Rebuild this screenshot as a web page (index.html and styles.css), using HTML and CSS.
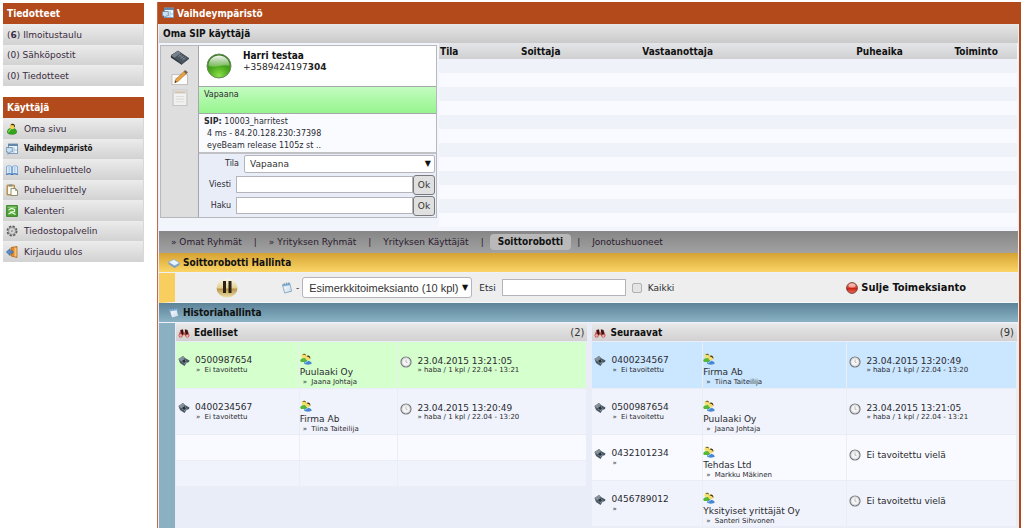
FILE: index.html
```html
<!DOCTYPE html>
<html lang="fi">
<head>
<meta charset="utf-8">
<title>Vaihdeympäristö</title>
<link rel="stylesheet" href="styles.css">
</head>
<body>
<svg class="defs" aria-hidden="true">
  <defs>
    <radialGradient id="g-green" cx="50%" cy="90%" r="85%"><stop offset="0" stop-color="#8be04a"/><stop offset=".5" stop-color="#4aa81c"/><stop offset="1" stop-color="#2f7a12"/></radialGradient>
    <linearGradient id="g-shine" x1="0" y1="0" x2="0" y2="1"><stop offset="0" stop-color="#fff" stop-opacity=".95"/><stop offset="1" stop-color="#fff" stop-opacity=".25"/></linearGradient>
    <linearGradient id="g-gold" x1="0" y1="0" x2="0" y2="1"><stop offset="0" stop-color="#fbf8ec"/><stop offset=".5" stop-color="#e4cf90"/><stop offset=".55" stop-color="#b8954a"/><stop offset="1" stop-color="#efe0a8"/></linearGradient>
    <linearGradient id="g-red" x1="0" y1="0" x2="0" y2="1"><stop offset="0" stop-color="#f4a090"/><stop offset=".45" stop-color="#e04a38"/><stop offset=".5" stop-color="#c81c10"/><stop offset="1" stop-color="#f07058"/></linearGradient>
    <linearGradient id="g-paper" x1="0" y1="0" x2="1" y2="1"><stop offset="0" stop-color="#fff"/><stop offset="1" stop-color="#c9d8e8"/></linearGradient>
  </defs>
  <symbol id="i-user" viewBox="0 0 12 13"><path d="M1 10c0-3 2-4.500 5-4.500s5 1.500 5 4.500c0 3-10 3-10 0z" fill="#35a51d" stroke="#1f7a10" stroke-width=".6"/><ellipse cx="6.300" cy="3.800" rx="2.700" ry="3" fill="#f2cf57"/><path d="M4.500 2.500C5 0 9 0 9.200 3.500L9 5C8 4 8 3 7.500 2.300z" fill="#2b2b14"/><path d="M2.500 10c0-2 1-3 2.500-3" stroke="#b5f08c" fill="none"/></symbol>
  <symbol id="i-window" viewBox="0 0 12 12"><rect x="2.500" y="1" width="9" height="9.500" fill="#eef7fd" stroke="#7d9cb8"/><path d="M2 1h10v2H2z" fill="#6488ab"/><path d="M8 4v6M8 7h3" stroke="#a5c1d8"/><path d="M.3 4.500h6v4.500H4L2 11.300V9H.3z" fill="#c9e0f2" stroke="#537ba0" stroke-width=".7"/></symbol>
  <symbol id="i-book" viewBox="0 0 12 12"><path d="M.5 2.500C2.500 1.500 4.500 1.500 6 3c1.500-1.500 3.500-1.500 5.500-.5v8C9.500 9.500 7.500 9.500 6 10.700 4.500 9.500 2.500 9.500.5 10.500z" fill="#dcebf9" stroke="#5f93c8" stroke-width=".7"/><path d="M.3 10.500C2.500 9.500 4.500 9.500 6 10.700 7.500 9.500 9.500 9.500 11.700 10.500M6 3v7.500" stroke="#2f69ae" fill="none"/><path d="M3.200 3v5.500M8.800 3v5.500" stroke="#8db4dc" stroke-width=".8"/></symbol>
  <symbol id="i-clip" viewBox="0 0 12 12"><rect x="1" y="1" width="7.500" height="10" rx=".6" fill="#d9a951" stroke="#8f6f32" stroke-width=".7"/><path d="M2 2.500h5.500v7.500H2z" fill="#fbfaf0"/><path d="M3.200.5h3v2h-3z" fill="#8b8b8b"/><path d="M5 4.500h4.500l2 2v5H5z" fill="#fdfdf4" stroke="#77775d" stroke-width=".8"/><path d="M9.500 4.500v2h2" stroke="#77775d" fill="none" stroke-width=".7"/></symbol>
  <symbol id="i-cal" viewBox="0 0 12 12"><rect x=".7" y=".7" width="10.600" height="10.600" fill="#53a839" stroke="#2f7a1d"/><path d="M1.500 2.200h9" stroke="#a5d98e"/><path d="M2.500 5l3-1.500 3 1v2L5 7l4.500 2.500M2.500 9l3-1.500" stroke="#f0ffe9" fill="none" stroke-width="1.200"/></symbol>
  <symbol id="i-gear" viewBox="0 0 12 12"><circle cx="6" cy="6" r="4.500" fill="#ccc" stroke="#5e5e60" stroke-width="2" stroke-dasharray="2.200 1.330"/><circle cx="6" cy="6" r="3.500" fill="#d5d5d5" stroke="#8a8a8a" stroke-width=".8"/><circle cx="6" cy="6" r=".8" fill="#666"/></symbol>
  <symbol id="i-exit" viewBox="0 0 12 12"><path d="M5 1.500L11 .5v11l-6-1.500z" fill="#e58a2c" stroke="#a55d18" stroke-width=".7"/><path d="M8.500 1.500l2 .2v9l-2-.5z" fill="#f7c277"/><path d="M.3 6L4 2.800V5h3v2.200H4v2.300z" fill="#5a90cf" stroke="#2c5c99" stroke-width=".6"/></symbol>
  <symbol id="i-phone" viewBox="0 0 20 16"><path d="M1 6L8 1.500l11 7.500-7 5.500z" fill="#4b5560" stroke="#2e353d" stroke-width=".7"/><path d="M1 6l7-4.500 3 2L4 8.500z" fill="#75818c"/><path d="M1 6l11 8.500v1L.8 8z" fill="#27303a"/><path d="M8 7.500l4-2.500M10 9l4-2.500M12 10.500l4-2.500M9 5.500l5.500 4.200" stroke="#8b97a1" stroke-width=".6"/></symbol>
  <symbol id="i-edit" viewBox="0 0 20 18"><rect x="1.500" y="6" width="16.500" height="10.500" fill="#fdfdfd" stroke="#bcbcbc"/><path d="M4 9.500h6M4 12h4" stroke="#d5d5d5"/><path d="M4.500 14.500l1-3.500L15.500 1.500l2.500 2L8 13z" fill="#efa33b" stroke="#9c6a28" stroke-width=".7"/><path d="M14 3l2.500 2.200L18 3.500l-2.500-2z" fill="#6b625c"/><path d="M4.500 14.500l.6-2 1.300 1.200z" fill="#222"/></symbol>
  <symbol id="i-note" viewBox="0 0 14 16"><path d="M.5 1h13v14.500H.5z" fill="#f1f1f0" stroke="#c5c5c5"/><path d="M1 1.500h12v3H1z" fill="#ddd"/><path d="M2 3h10" stroke="#d4b591"/><path d="M3 7h8M3 9.500h8M3 12h8" stroke="#ddd"/></symbol>
  <symbol id="i-small-phone" viewBox="0 0 12 12"><path d="M.5 4L5 1l2 2 4.500 2.500L11 7 8.500 8 6.500 11 2 8z" fill="#4c5863"/><path d="M.5 4L5 1l2 1.700L2.500 6z" fill="#87949d"/><path d="M3 6l3.500-2.200M4.500 7.500L8 5M6 9l3-2.300" stroke="#9eb3bb" stroke-width=".7"/><circle cx="6" cy="6" r="1.300" fill="#26323b"/></symbol>
  <symbol id="i-people" viewBox="0 0 12 12"><path d="M.3 7.500C.3 4.500 6.500 4 7 7v2H1z" fill="#55b935"/><circle cx="3.800" cy="3" r="2.300" fill="#f5e06c"/><path d="M2.300 1.700C3 .2 6 .3 6.200 2.700L5 2z" fill="#6d6420"/><path d="M4 10.500c0-3.500 7-4 7.700 0C11 12 5 12 4 10.500z" fill="#4688cf"/><circle cx="7.800" cy="5" r="2.400" fill="#f7da69"/><path d="M6.500 3.300C7.500 2 10.700 2.300 10.400 6L9 4.300z" fill="#443613"/><path d="M5 10.300c.5-1 1.500-1.800 2.500-1.800" stroke="#b9ddfb" fill="none"/></symbol>
  <symbol id="i-clock" viewBox="0 0 12 12"><circle cx="6" cy="6" r="5" fill="#f5f5f5" stroke="#77797c" stroke-width="1.200"/><circle cx="6" cy="6" r="3.900" fill="none" stroke="#cfd1d4" stroke-width=".7"/><path d="M6 3.500v2.700l1.500.4" stroke="#a5a5a5" fill="none" stroke-width=".7"/></symbol>
  <symbol id="i-bino" viewBox="0 0 12 12"><path d="M2.500 3L5 2.500l.6 3h1L7 2.500l2.500.5L11.500 8c.2 3-3.500 3.500-4.200 1L6 7.500 4.700 9C4 11.500.3 11 .5 8z" fill="#c65550"/><path d="M2.500 3L5 2.500l.6 4.500-1.800 1zM6.800 2.500l2.500.5 1 4-2.500 1.200z" fill="#351516"/><circle cx="2.600" cy="8.500" r="1.300" fill="#efaaa5"/><circle cx="9.300" cy="8.700" r="1.300" fill="#efaaa5"/></symbol>
  <symbol id="i-disk" viewBox="0 0 12 12"><path d="M.5 5L6 2.500 11.500 6v2L6.500 11 .5 7z" fill="#7aa2c9"/><path d="M.5 5L6 2.500 11.500 6l-5 2.800z" fill="#e9f4ff" stroke="#88aacb" stroke-width=".5"/></symbol>
  <symbol id="i-pad" viewBox="0 0 12 13"><path d="M1 3l8-1.500L11 10l-7.500 2z" fill="url(#g-paper)" stroke="#6f9abb" stroke-width=".8"/><path d="M1 3l8-1.500.5 2-8 1.500z" fill="#7fb4da"/><path d="M3 1v2.500M5.500.5V3M8 .3v2.500" stroke="#5f7d95" stroke-width=".7"/><path d="M11 10l-2.500-.3.500 1z" fill="#87a9c1"/></symbol>
  <symbol id="i-pause" viewBox="0 0 22 20"><ellipse cx="11" cy="10" rx="10.500" ry="9.500" fill="url(#g-gold)"/><path d="M7 3h3v12H7zM12.500 3h3v12h-3z" fill="#2b2115"/></symbol>
  <symbol id="i-ball" viewBox="0 0 26 26"><circle cx="13" cy="13" r="12" fill="url(#g-green)" stroke="#6b8a62"/><path d="M2.500 13C2.500-1 23.500-1 23.500 13 17 10.500 9 15.500 2.500 13z" fill="url(#g-shine)"/></symbol>
  <symbol id="i-stop" viewBox="0 0 12 12"><circle cx="6" cy="6" r="5.400" fill="url(#g-red)" stroke="#6e3430" stroke-width=".9"/><ellipse cx="6" cy="3.500" rx="3.300" ry="2" fill="#fff" opacity=".45"/></symbol>
</svg>

<div class="page">
  <aside class="side">
    <nav class="box">
      <h2 class="bar-red">Tiedotteet</h2>
      <ul class="menu">
        <li><a href="#">(<b>6</b>) Ilmoitustaulu</a></li>
        <li><a href="#">(0) Sähköpostit</a></li>
        <li><a href="#">(0) Tiedotteet</a></li>
      </ul>
    </nav>
    <nav class="box">
      <h2 class="bar-red">Käyttäjä</h2>
      <ul class="menu icons">
        <li><a href="#"><svg class="ic"><use href="#i-user"/></svg>Oma sivu</a></li>
        <li><a href="#" class="current"><svg class="ic"><use href="#i-window"/></svg>Vaihdeympäristö</a></li>
        <li><a href="#"><svg class="ic"><use href="#i-book"/></svg>Puhelinluettelo</a></li>
        <li><a href="#"><svg class="ic"><use href="#i-clip"/></svg>Puheluerittely</a></li>
        <li><a href="#"><svg class="ic"><use href="#i-cal"/></svg>Kalenteri</a></li>
        <li><a href="#"><svg class="ic"><use href="#i-gear"/></svg>Tiedostopalvelin</a></li>
        <li><a href="#"><svg class="ic"><use href="#i-exit"/></svg>Kirjaudu ulos</a></li>
      </ul>
    </nav>
  </aside>

  <main class="main">
    <h1 class="bar-red title"><svg class="ic"><use href="#i-window"/></svg>Vaihdeympäristö</h1>
    <h2 class="bar-grey">Oma SIP käyttäjä</h2>

    <section class="top">
      <div class="sip">
        <div class="tools">
          <svg class="tool"><use href="#i-phone"/></svg>
          <svg class="tool"><use href="#i-edit"/></svg>
          <svg class="tool"><use href="#i-note"/></svg>
        </div>
        <div class="card">
          <div class="who">
            <svg class="ball"><use href="#i-ball"/></svg>
            <div><h3 class="name">Harri testaa</h3><p class="tel">+3589424197<b>304</b></p></div>
          </div>
          <p class="status">Vapaana</p>
          <div class="info">
            <p><b>SIP:</b> 10003_harritest</p>
            <p class="in">4 ms - 84.20.128.230:37398</p>
            <p class="in">eyeBeam release 1105z st ..</p>
          </div>
          <form class="form">
            <div class="line"><label class="wide" for="tila">Tila</label><span class="pick"><select id="tila"><option>Vapaana</option></select></span></div>
            <div class="line"><label for="viesti">Viesti</label><input id="viesti" type="text"><button type="button">Ok</button></div>
            <div class="line"><label for="haku">Haku</label><input id="haku" type="text"><button type="button">Ok</button></div>
          </form>
        </div>
      </div>
      <table class="calls">
        <colgroup><col class="c1"><col class="c2"><col class="c3"><col class="c4"><col class="c5"></colgroup>
        <thead><tr><th>Tila</th><th>Soittaja</th><th>Vastaanottaja</th><th>Puheaika</th><th>Toiminto</th></tr></thead>
        <tbody>
          <tr><td colspan="5"></td></tr><tr><td colspan="5"></td></tr><tr><td colspan="5"></td></tr><tr><td colspan="5"></td></tr>
          <tr><td colspan="5"></td></tr><tr><td colspan="5"></td></tr><tr><td colspan="5"></td></tr><tr><td colspan="5"></td></tr>
          <tr><td colspan="5"></td></tr><tr><td colspan="5"></td></tr><tr><td colspan="5"></td></tr><tr><td colspan="5"></td></tr>
        </tbody>
      </table>
    </section>

    <nav class="tabs">
      <a href="#">» Omat Ryhmät</a><span>|</span>
      <a href="#">» Yrityksen Ryhmät</a><span>|</span>
      <a href="#">Yrityksen Käyttäjät</a><span>|</span>
      <a href="#" class="on">Soittorobotti</a><span>|</span>
      <a href="#">Jonotushuoneet</a>
    </nav>

    <h2 class="strip gold"><svg class="ic"><use href="#i-disk"/></svg>Soittorobotti Hallinta</h2>
    <div class="robot">
      <button type="button" class="bare pause" aria-label="Tauko"><svg><use href="#i-pause"/></svg></button>
      <svg class="ic"><use href="#i-pad"/></svg><span class="dash">-</span>
      <span class="pick job"><select aria-label="Toimeksianto"><option>Esimerkkitoimeksianto (10 kpl)</option></select></span>
      <label class="find" for="etsi">Etsi</label><input id="etsi" class="search" type="text">
      <input id="kaikki" class="check" type="checkbox"><label for="kaikki">Kaikki</label>
      <button type="button" class="bare close"><svg class="ic"><use href="#i-stop"/></svg>Sulje Toimeksianto</button>
    </div>

    <h2 class="strip teal"><svg class="ic"><use href="#i-pad"/></svg>Historiahallinta</h2>
    <section class="history">
      <div class="col">
        <h3 class="colhead"><svg class="ic"><use href="#i-bino"/></svg>Edelliset<span class="count">(2)</span></h3>
        <table class="log">
          <colgroup><col class="l1"><col class="l2"><col></colgroup>
          <tr class="green">
            <td><div class="cell"><svg class="ic"><use href="#i-small-phone"/></svg><div>0500987654<p class="sub"><i>»</i> Ei tavoitettu</p></div></div></td>
            <td><svg class="ic"><use href="#i-people"/></svg><div class="firm">Puulaaki Oy</div><p class="sub"><i>»</i> Jaana Johtaja</p></td>
            <td><div class="cell time"><svg class="ic"><use href="#i-clock"/></svg><div>23.04.2015 13:21:05<p class="when">» haba / 1 kpl / 22.04 - 13:21</p></div></div></td>
          </tr>
          <tr>
            <td><div class="cell"><svg class="ic"><use href="#i-small-phone"/></svg><div>0400234567<p class="sub"><i>»</i> Ei tavoitettu</p></div></div></td>
            <td><svg class="ic"><use href="#i-people"/></svg><div class="firm">Firma Ab</div><p class="sub"><i>»</i> Tiina Taiteilija</p></td>
            <td><div class="cell time"><svg class="ic"><use href="#i-clock"/></svg><div>23.04.2015 13:20:49<p class="when">» haba / 1 kpl / 22.04 - 13:20</p></div></div></td>
          </tr>
          <tr class="pale empty"><td></td><td></td><td></td></tr>
          <tr class="empty"><td></td><td></td><td></td></tr>
        </table>
      </div>
      <div class="col">
        <h3 class="colhead"><svg class="ic"><use href="#i-bino"/></svg>Seuraavat<span class="count">(9)</span></h3>
        <table class="log">
          <colgroup><col class="r1"><col class="r2"><col></colgroup>
          <tr class="blue">
            <td><div class="cell"><svg class="ic"><use href="#i-small-phone"/></svg><div>0400234567<p class="sub"><i>»</i> Ei tavoitettu</p></div></div></td>
            <td><svg class="ic"><use href="#i-people"/></svg><div class="firm">Firma Ab</div><p class="sub"><i>»</i> Tiina Taiteilija</p></td>
            <td><div class="cell time"><svg class="ic"><use href="#i-clock"/></svg><div>23.04.2015 13:20:49<p class="when">» haba / 1 kpl / 22.04 - 13:20</p></div></div></td>
          </tr>
          <tr>
            <td><div class="cell"><svg class="ic"><use href="#i-small-phone"/></svg><div>0500987654<p class="sub"><i>»</i> Ei tavoitettu</p></div></div></td>
            <td><svg class="ic"><use href="#i-people"/></svg><div class="firm">Puulaaki Oy</div><p class="sub"><i>»</i> Jaana Johtaja</p></td>
            <td><div class="cell time"><svg class="ic"><use href="#i-clock"/></svg><div>23.04.2015 13:21:05<p class="when">» haba / 1 kpl / 22.04 - 13:21</p></div></div></td>
          </tr>
          <tr class="pale">
            <td><div class="cell"><svg class="ic"><use href="#i-small-phone"/></svg><div>0432101234<p class="sub"><i>»</i></p></div></div></td>
            <td><svg class="ic"><use href="#i-people"/></svg><div class="firm">Tehdas Ltd</div><p class="sub"><i>»</i> Markku Mäkinen</p></td>
            <td><div class="cell time mid"><svg class="ic"><use href="#i-clock"/></svg><div>Ei tavoitettu vielä</div></div></td>
          </tr>
          <tr>
            <td><div class="cell"><svg class="ic"><use href="#i-small-phone"/></svg><div>0456789012<p class="sub"><i>»</i></p></div></div></td>
            <td><svg class="ic"><use href="#i-people"/></svg><div class="firm">Yksityiset yrittäjät Oy</div><p class="sub"><i>»</i> Santeri Sihvonen</p></td>
            <td><div class="cell time mid"><svg class="ic"><use href="#i-clock"/></svg><div>Ei tavoitettu vielä</div></div></td>
          </tr>
        </table>
      </div>
    </section>
  </main>
</div>
</body>
</html>
```
FILE: styles.css
```css
* { box-sizing: border-box; }
body { margin: 0; background: #fff; color: #2a2a30; font: 9px/10px "DejaVu Sans", Verdana, sans-serif; }
h1, h2, h3, p, ul { margin: 0; padding: 0; }
h1, h2, h3, th, .close, .on, .current { font-family: "DejaVu Sans Condensed", "Noto Sans", sans-serif; font-weight: bold; font-size: 10px; color: #111; }
a { color: inherit; text-decoration: none; }
i { font-style: normal; }
.defs { position: absolute; width: 0; height: 0; }
.ic { width: 12px; height: 12px; flex: none; display: block; }

.page { display: flex; gap: 13px; padding: 2px 3px 0; min-height: 100vh; }
.side { flex: 0 0 141px; padding-top: 1px; }
.box { margin-bottom: 11px; }
.bar-red { height: 21px; padding: 0 4px; background: #b24a1b; color: #fff; line-height: 21px; }
.menu { list-style: none; }
.menu li { height: 21px; background: linear-gradient(#ececec, #d2d2d2); border-right: 1px solid #d8d8d8; }
.menu li:nth-child(even) { height: 20px; }
.menu a { display: flex; align-items: center; height: 100%; padding-left: 4px; color: #3a2a40; white-space: pre; }
.icons a { padding-left: 3px; gap: 6px; }
.menu .current { font-size: 8px; color: #111; }

.main { flex: 1; display: flex; flex-direction: column; background: #e9edf8; border-left: 1px solid #c4694a; border-right: 2px solid #b24a1b; padding: 0 1px; }
.title { display: flex; align-items: center; gap: 3px; margin: 0 -1px; height: 22px; }
.bar-grey { height: 19px; line-height: 19px; padding-left: 4px; background: linear-gradient(#e6e6e6, #cacaca); }

.top { display: flex; gap: 2px; height: 188px; background: #f2f5fc; }
.sip { flex: 0 0 277px; align-self: flex-start; display: flex; margin: 2px 0 0 1px; border: 1px solid #b5b8bc; }
.tools { flex: 0 0 38px; display: flex; flex-direction: column; align-items: center; gap: 3px; padding-top: 3px; background: #dedede; border-right: 1px solid #a5a7aa; }
.tool { width: 20px; height: 17px; }
.card { flex: 1; background: #e9edf8; }
.who { display: flex; gap: 11px; height: 41px; padding: 4px 7px; background: #fff; border-bottom: 1px solid #a5a7aa; }
.ball { width: 26px; height: 26px; margin-top: 3px; }
.name { line-height: 12px; }
.tel { line-height: 11px; color: #222; }
.status { height: 27px; padding: 3px 5px; font-size: 8px; background: linear-gradient(#c4fcc0, #96f48e); border-bottom: 1px solid #a5a7aa; }
.info { height: 40px; padding: 2px 5px; font-size: 8px; line-height: 12px; background: #f9fbff; border-bottom: 2px solid #c0c2c6; }
.info .in { padding-left: 3px; }
.form { display: flex; flex-direction: column; gap: 2px; padding: 0 1px 2px 0; }
.line { display: flex; align-items: center; height: 19px; }
.line label { flex: 0 0 37px; padding-right: 5px; text-align: right; font-size: 8px; }
.line label.wide { flex-basis: 45px; }
input, select, button { font: inherit; color: #333; margin: 0; }
input[type="text"] { height: 17px; min-width: 0; padding: 0 4px; border: 1px solid #b4b4ba; background: #fff; }
.line input { flex: 1; }
.line button { width: 22px; height: 20px; padding: 0; border: 1px solid #77797d; border-radius: 3px; background: #e0e0e0; }
.pick { position: relative; flex: 1; display: flex; }
.pick::after { content: "▼"; position: absolute; right: 4px; top: 50%; margin-top: -5px; font: 8px/10px "DejaVu Sans", sans-serif; color: #111; pointer-events: none; }
.pick select { appearance: none; width: 100%; height: 18px; padding: 0 5px; border: 1px solid #b4b4ba; border-radius: 2px; background: #fff; }

.calls { flex: 1; align-self: flex-start; table-layout: fixed; border-collapse: collapse; margin-right: 1px; }
.calls .c1 { width: 14%; }
.calls .c2 { width: 21%; }
.calls .c3 { width: 37%; }
.calls .c4 { width: 17%; }
.calls th { height: 16px; padding: 2px 1px 0; text-align: left; background: linear-gradient(#e4e5e8, #d0d0d2); }
.calls td { height: 14px; padding: 0; background: #f9faff; }
.calls tr:nth-child(odd) td { background: #f0f2fa; }

.tabs { display: flex; align-items: center; gap: 12px; height: 22px; padding-left: 12px; background: linear-gradient(#868686, #a2a2a2); color: #2b1b30; }
.tabs .on { padding: 3px 8px; margin: 0 -6px; border-radius: 4px; background: #b9b9b9; }

.strip { display: flex; align-items: center; gap: 3px; height: 20px; padding-left: 9px; border-bottom: 1px solid #eef2f6; }
.gold { background: linear-gradient(#d5a334, #fbd567); }
.teal { background: linear-gradient(#5c8398, #8ab2c4); }
.robot { display: flex; align-items: center; height: 30px; border-left: 16px solid #f8cf5e; background: #eee; border-bottom: 1px solid #f4f8fb; }
.bare { display: flex; align-items: center; padding: 0; border: 0; background: none; }
.pause { margin: 0 43px 0 41px; }
.pause svg { width: 22px; height: 20px; }
.dash { padding: 0 3px; }
.job { flex: 0 0 170px; font: 11px "Liberation Sans", Arial, sans-serif; }
.job select { height: 21px; padding: 0 6px; border-radius: 3px; }
.find { margin: 0 6px 0 7px; }
.search { width: 124px; }
.robot .check { appearance: none; width: 10px; height: 10px; margin: 0 6px; border: 1px solid #b0b0b0; border-radius: 2px; background: #e4e4e4; }
.robot .check:checked { background: #678; }
.robot .close { margin: 0 52px 0 auto; gap: 3px; font: bold 11px "DejaVu Sans Condensed", "Noto Sans", sans-serif; color: #111; }

.history { flex: 1; display: grid; grid-template-columns: 411fr 425fr; gap: 5px; padding: 1px 0 0 1px; border-left: 16px solid #8ab0c1; }
.history .col:last-child { margin-right: 1px; }
.colhead { display: flex; align-items: center; gap: 4px; height: 17px; padding: 0 3px 0 2px; background: linear-gradient(#e8e8e8, #d2d0d0); }
.count { margin-left: auto; font: 10px "DejaVu Sans", sans-serif; color: #333; }
.log { width: 100%; margin-top: 1px; table-layout: fixed; border-collapse: collapse; }
.l1 { width: 30%; }
.l2 { width: 24%; }
.r1 { width: 26%; }
.r2 { width: 34%; }
.log td { height: 46px; padding: 11px 0 0 2px; vertical-align: top; background: #f0f3fb; border-right: 1px solid #eaedf6; border-bottom: 1px solid #eaedf6; white-space: nowrap; }
.log td:nth-child(2) { padding-left: 0; }
.log .empty td { height: 26px; padding: 0; }
.log .green td { background: #d5ffcc; }
.log .blue td { background: #cbe6ff; }
.log .pale td { background: #f9faff; }
.cell { display: flex; gap: 5px; padding-top: 2px; }
.time { padding-top: 3px; }
.mid { align-items: center; }
.firm { padding-top: 2px; }
.sub { font-size: 7px; line-height: 10px; }
.sub i { margin: 0 2px 0 1px; }
td > .sub { padding-left: 2px; }
.when { font-size: 7px; line-height: 9px; }
```
